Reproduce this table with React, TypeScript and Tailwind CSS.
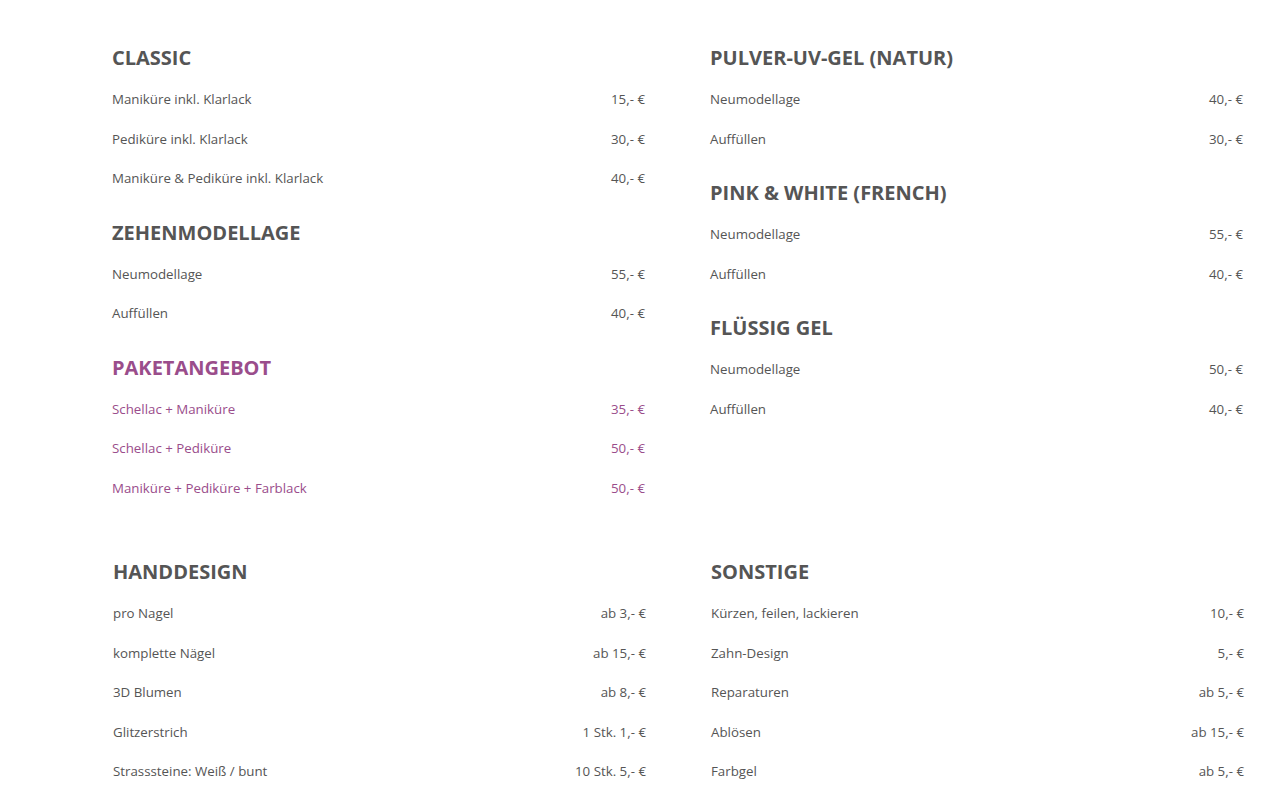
import React from "react";

type Item = { name: string; price: string };
type Section = { title: string; items: Item[]; accent?: boolean };

const topLeft: Section[] = [
  {
    title: "Classic",
    items: [
      { name: "Maniküre inkl. Klarlack", price: "15,- €" },
      { name: "Pediküre inkl. Klarlack", price: "30,- €" },
      { name: "Maniküre & Pediküre inkl. Klarlack", price: "40,- €" },
    ],
  },
  {
    title: "Zehenmodellage",
    items: [
      { name: "Neumodellage", price: "55,- €" },
      { name: "Auffüllen", price: "40,- €" },
    ],
  },
  {
    title: "Paketangebot",
    accent: true,
    items: [
      { name: "Schellac + Maniküre", price: "35,- €" },
      { name: "Schellac + Pediküre", price: "50,- €" },
      { name: "Maniküre + Pediküre + Farblack", price: "50,- €" },
    ],
  },
];

const topRight: Section[] = [
  {
    title: "Pulver-UV-Gel (Natur)",
    items: [
      { name: "Neumodellage", price: "40,- €" },
      { name: "Auffüllen", price: "30,- €" },
    ],
  },
  {
    title: "Pink & White (French)",
    items: [
      { name: "Neumodellage", price: "55,- €" },
      { name: "Auffüllen", price: "40,- €" },
    ],
  },
  {
    title: "Flüssig Gel",
    items: [
      { name: "Neumodellage", price: "50,- €" },
      { name: "Auffüllen", price: "40,- €" },
    ],
  },
];

const bottomLeft: Section = {
  title: "Handdesign",
  items: [
    { name: "pro Nagel", price: "ab 3,- €" },
    { name: "komplette Nägel", price: "ab 15,- €" },
    { name: "3D Blumen", price: "ab 8,- €" },
    { name: "Glitzerstrich", price: "1 Stk. 1,- €" },
    { name: "Strasssteine: Weiß / bunt", price: "10 Stk. 5,- €" },
  ],
};

const bottomRight: Section = {
  title: "Sonstige",
  items: [
    { name: "Kürzen, feilen, lackieren", price: "10,- €" },
    { name: "Zahn-Design", price: "5,- €" },
    { name: "Reparaturen", price: "ab 5,- €" },
    { name: "Ablösen", price: "ab 15,- €" },
    { name: "Farbgel", price: "ab 5,- €" },
  ],
};

function PriceSection({ section }: { section: Section }) {
  const color = section.accent ? "text-[#9a4d8b]" : "text-[#555555]";
  return (
    <div className="mb-[19px]">
      <h2 className={`text-[20px] font-bold uppercase leading-[30px] ${section.accent ? "text-[#9a4d8b]" : "text-[#555555]"}`}>
        {section.title}
      </h2>
      <ul className="mt-[7px]">
        {section.items.map((item) => (
          <li key={item.name} className={`flex justify-between text-[13.3px] leading-[39.5px] ${color}`}>
            <span>{item.name}</span>
            <span>{item.price}</span>
          </li>
        ))}
      </ul>
    </div>
  );
}

export default function App() {
  return (
    <div
      className="min-h-[806px] w-full bg-white"
      style={{ fontFamily: '"Open Sans", "Liberation Sans", sans-serif' }}
    >
      <div className="grid grid-cols-2 gap-x-[65px] pl-[112px] pr-[32px] pt-[43px]">
        <div>
          {topLeft.map((s) => (
            <PriceSection key={s.title} section={s} />
          ))}
        </div>
        <div>
          {topRight.map((s) => (
            <PriceSection key={s.title} section={s} />
          ))}
        </div>
      </div>
      <div className="mt-[30px] grid grid-cols-2 gap-x-[65px] pl-[113px] pr-[31px]">
        <PriceSection section={bottomLeft} />
        <PriceSection section={bottomRight} />
      </div>
    </div>
  );
}
